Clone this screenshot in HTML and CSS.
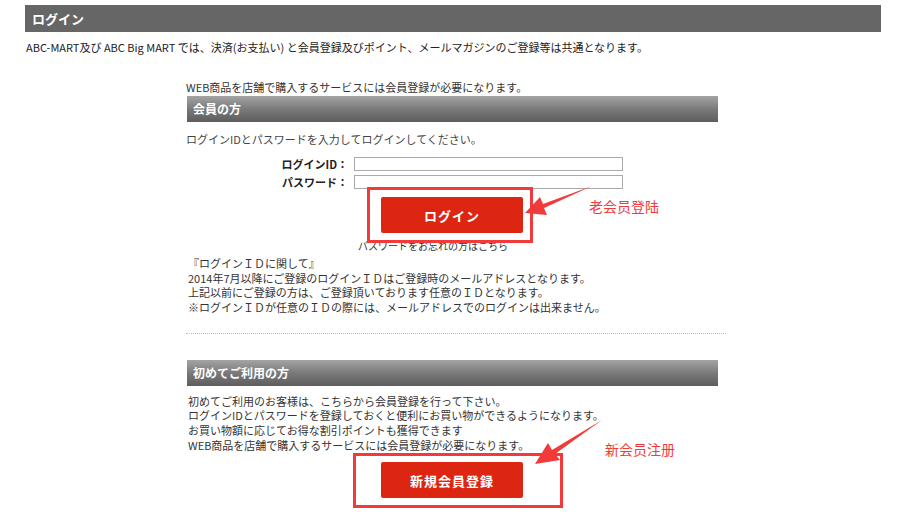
FILE: index.html
```html
<!DOCTYPE html>
<html lang="ja">
<head>
  <meta charset="UTF-8" />
  <title>ログイン</title>
  <link rel="stylesheet" href="styles.css">
</head>
<body>
  <div class="page">
    <h1 class="titleBar">ログイン</h1>
    <p class="lead">ABC-MART及び ABC Big MART では、決済(お支払い) と会員登録及びポイント、メールマガジンのご登録等は共通となります。</p>

    <div class="content">
      <p class="note">WEB商品を店舗で購入するサービスには会員登録が必要になります。</p>
      <h2 class="secHead">会員の方</h2>
      <p class="intro">ログインIDとパスワードを入力してログインしてください。</p>

      <form class="loginForm">
        <div class="row">
          <label for="loginId">ログインID：</label>
          <input type="text" id="loginId" />
        </div>
        <div class="row">
          <label for="loginPw">パスワード：</label>
          <input type="password" id="loginPw" />
        </div>
      </form>

      <div class="btnRow"><button class="redBtn">ログイン</button></div>
      <a class="forgot">パスワードをお忘れの方はこちら</a>

      <div class="idNote">
        <p>『ログインＩＤに関して』</p>
        <p>2014年7月以降にご登録のログインＩＤはご登録時のメールアドレスとなります。</p>
        <p>上記以前にご登録の方は、ご登録頂いております任意のＩＤとなります。</p>
        <p>※ログインＩＤが任意のＩＤの際には、メールアドレスでのログインは出来ません。</p>
      </div>

      <hr class="dots" />

      <h2 class="secHead">初めてご利用の方</h2>
      <div class="newText">
        <p>初めてご利用のお客様は、こちらから会員登録を行って下さい。</p>
        <p>ログインIDとパスワードを登録しておくと便利にお買い物ができるようになります。</p>
        <p>お買い物額に応じてお得な割引ポイントも獲得できます</p>
        <p>WEB商品を店舗で購入するサービスには会員登録が必要になります。</p>
      </div>
      <div class="btnRow"><button class="redBtn">新規会員登録</button></div>
    </div>

    <!-- annotations drawn over the page -->
    <div class="markBox markOld"></div>
    <div class="markBox markNew"></div>
    <svg class="arrows" width="900" height="512" viewBox="0 0 900 512">
      <polygon points="525,213 540,197 543,204 592,186 544,208 547,215" fill="#f23a3a" />
      <polygon points="535,464 548,443 552,450 602,420 555,454 560,460" fill="#f23a3a" />
    </svg>
    <span class="markLabel labelOld">老会员登陆</span>
    <span class="markLabel labelNew">新会员注册</span>
  </div>
</body>
</html>
```

FILE: styles.css
```css
body {
  margin: 0;
  background: #fff;
  color: #333;
  font-family: "Noto Sans CJK JP", "Noto Sans", sans-serif;
  font-size: 11px;
}

p {
  margin: 0;
}

.page {
  position: relative;
  width: 900px;
  height: 512px;
  overflow: hidden;
}

.titleBar {
  margin: 5px 0 0 25px;
  width: 856px;
  height: 27px;
  line-height: 27px;
  padding-left: 7px;
  box-sizing: border-box;
  background: #666;
  color: #fff;
  font-size: 13px;
  font-weight: bold;
}

.lead {
  margin: 8px 0 0 26px;
  line-height: 14px;
  color: #222;
}

.content {
  margin: 26px 0 0 186px;
  width: 532px;
}

.note {
  line-height: 14px;
}

.secHead {
  margin: 2px 0 0 1px;
  height: 26px;
  line-height: 26px;
  padding-left: 6px;
  background: linear-gradient(to bottom, #a4a4a4 0%, #7a7a7a 50%, #5d5d5d 100%);
  color: #fff;
  font-size: 12px;
  font-weight: bold;
}

.intro {
  margin-top: 10px;
  line-height: 14px;
  color: #444;
}

.loginForm {
  margin-top: 9px;
}

.row {
  display: flex;
  align-items: center;
  height: 18px;
}

.row label {
  width: 162px;
  padding-right: 6px;
  text-align: right;
  font-weight: bold;
  color: #222;
}

.row input {
  width: 269px;
  height: 14px;
  padding: 0;
  box-sizing: border-box;
  border: 1px solid #a9a9a9;
}

.btnRow {
  display: flex;
  justify-content: center;
  margin-top: 6px;
}

.redBtn {
  width: 142px;
  height: 36px;
  border: none;
  border-radius: 2px;
  background: #dd2611;
  color: #fff;
  font-family: inherit;
  font-size: 13px;
  font-weight: bold;
  letter-spacing: 1px;
}

.forgot {
  display: block;
  margin: 6px 0 0 172px;
  font-size: 10px;
  line-height: 13px;
  color: #333;
}

.idNote {
  margin-top: 4px;
  padding-left: 2px;
  line-height: 14.7px;
}

.dots {
  margin: 18px 0 0 0;
  width: 540px;
  border: none;
  border-top: 1px dotted #bbb;
}

.dots + .secHead {
  margin-top: 26px;
}

.newText {
  margin-top: 8px;
  padding-left: 2px;
  line-height: 14.6px;
}

.newText + .btnRow {
  margin-top: 10px;
}

.markBox {
  position: absolute;
  border: 3px solid #f23a3a;
  box-sizing: border-box;
}

.markOld {
  left: 367px;
  top: 187px;
  width: 166px;
  height: 56px;
}

.markNew {
  left: 353px;
  top: 453px;
  width: 210px;
  height: 55px;
}

.arrows {
  position: absolute;
  left: 0;
  top: 0;
  pointer-events: none;
}

.markLabel {
  position: absolute;
  font-family: "Noto Sans CJK SC", sans-serif;
  font-size: 14px;
  line-height: 16px;
  color: #f23a3a;
}

.labelOld {
  left: 589px;
  top: 198px;
}

.labelNew {
  left: 605px;
  top: 441px;
}
```
